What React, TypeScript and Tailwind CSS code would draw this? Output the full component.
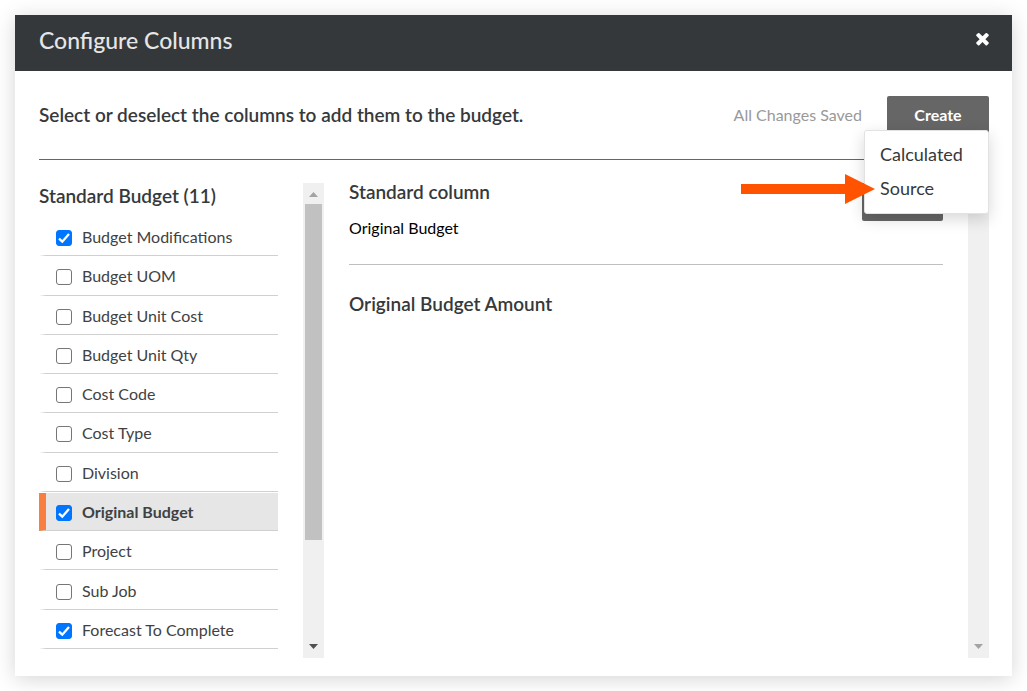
import { useState } from "react";

const columns = [
  { name: "Budget Modifications", enabled: true },
  { name: "Budget UOM", enabled: false },
  { name: "Budget Unit Cost", enabled: false },
  { name: "Budget Unit Qty", enabled: false },
  { name: "Cost Code", enabled: false },
  { name: "Cost Type", enabled: false },
  { name: "Division", enabled: false },
  { name: "Original Budget", enabled: true },
  { name: "Project", enabled: false },
  { name: "Sub Job", enabled: false },
  { name: "Forecast To Complete", enabled: true },
];

function ColumnRow({ name, enabled, active }: { name: string; enabled: boolean; active: boolean }) {
  const [checked, setChecked] = useState(enabled);
  return (
    <li className="flex pt-px">
      <label
        className={
          active
            ? "flex flex-1 items-center border-b border-b-[#d0d0d0] border-l-7 border-l-[#f77f42] bg-[#e6e6e6] pt-px pl-2.5 font-bold"
            : "flex flex-1 items-center border-b border-b-[#d0d0d0] border-l-7 border-l-transparent pt-px pl-2.5"
        }
      >
        <span className="relative mt-0.5 flex size-4">
          <input
            type="checkbox"
            checked={checked}
            onChange={() => setChecked(!checked)}
            className="size-4 appearance-none rounded-[3px] border border-[#767676] bg-white checked:border-[#0075ff] checked:bg-[#0075ff]"
          />
          {checked && (
            <svg viewBox="0 0 16 16" className="pointer-events-none absolute inset-0 size-4" fill="none">
              <path d="M3 8.6 6.3 11.7 13 4" stroke="#fff" strokeWidth="2.3" />
            </svg>
          )}
        </span>
        <span className="pl-2.5">{name}</span>
      </label>
    </li>
  );
}

function Triangle({ up, dark }: { up?: boolean; dark?: boolean }) {
  return (
    <svg viewBox="0 0 9 5" className="h-[5px] w-[9px]" fill={dark ? "#505050" : "#a3a3a3"}>
      <path d={up ? "M0 5 4.5 0 9 5z" : "M0 0 4.5 5 9 0z"} />
    </svg>
  );
}

export default function App() {
  return (
    <div className="bg-white p-[15px] font-[Lato,sans-serif] text-[#36393b]">
      <section
        role="dialog"
        aria-labelledby="dialog-title"
        className="bg-white shadow-[0_3px_20px_rgba(0,0,0,0.17)]"
      >
        <header className="flex h-14 items-start justify-between bg-[#34383b] pr-5 pl-6">
          <h1 id="dialog-title" className="pt-[9px] text-[23px] leading-8 font-medium text-[#e6e6e6]">
            Configure Columns
          </h1>
          <button type="button" aria-label="Close" className="mt-3.5">
            <svg viewBox="0 0 1792 1792" className="size-[19px]" fill="#fff">
              <path d="M1490 1322q0 40-28 68l-136 136q-28 28-68 28t-68-28l-294-294-294 294q-28 28-68 28t-68-28l-136-136q-28-28-28-68t28-68l294-294-294-294q-28-28-28-68t28-68l136-136q28-28 68-28t68 28l294 294 294-294q28-28 68-28t68 28l136 136q28 28 28 68t-28 68l-294 294 294 294q28 28 28 68z" />
            </svg>
          </button>
        </header>

        <div className="pt-[25px] pr-[23px] pb-[18px] pl-6">
          <div className="flex h-16 items-start border-b border-[#666]">
            <h2 className="flex-1 pt-[5px] text-[19px] leading-7 font-semibold">
              Select or deselect the columns to add them to the budget.
            </h2>
            <span className="pt-[7px] pr-[25px] text-base text-[#999]">All Changes Saved</span>
            <div className="relative">
              <button
                type="button"
                aria-haspopup="menu"
                aria-expanded="true"
                className="h-[38px] w-[102px] rounded-[2px] bg-[#666] text-base font-bold text-white"
              >
                Create
              </button>
              <ul
                role="menu"
                className="absolute top-[34px] right-0 z-10 w-[125px] rounded-[3px] border border-[#e2e2e2] bg-white pt-1.5 pb-2 text-lg shadow-[0_5px_16px_rgba(0,0,0,0.16)]"
              >
                <li role="none">
                  <button type="button" role="menuitem" className="h-[34px] w-full pl-[15px] text-left">
                    Calculated
                  </button>
                </li>
                <li role="none" className="relative">
                  <button type="button" role="menuitem" className="h-[34px] w-full pl-[15px] text-left">
                    Source
                  </button>
                  <svg
                    viewBox="0 0 134 30"
                    aria-hidden="true"
                    className="pointer-events-none absolute top-[3px] right-[113px] h-[30px] w-[134px]"
                    fill="#ff5300"
                  >
                    <path d="M0 10H104V0L134 15 104 30V20H0z" />
                  </svg>
                </li>
              </ul>
            </div>
          </div>

          <div className="mt-[23px] flex h-[475px]">
            <aside className="flex w-[239px] flex-col pb-[9px]">
              <h3 className="h-[34px] text-[19px] leading-[26px] font-semibold">Standard Budget (11)</h3>
              <ul className="grid flex-1 auto-rows-fr text-base text-[#3f4244]">
                {columns.map((c) => (
                  <ColumnRow key={c.name} name={c.name} enabled={c.enabled} active={c.name === "Original Budget"} />
                ))}
              </ul>
            </aside>
            <div className="ml-[25px] flex w-[21px] flex-col items-center justify-between bg-[#f0f0f0] py-[9px]">
              <Triangle up />
              <div className="mt-[7px] mb-auto h-[336px] w-[17px] bg-[#c1c1c1]" />
              <Triangle dark />
            </div>

            <main className="ml-[25px] flex-1">
              <div className="flex h-[82px] items-start justify-between border-b border-[#bfbfbf]">
                <div>
                  <h3 className="text-[19px] leading-[18px] font-semibold">Standard column</h3>
                  <p className="pt-[15px] text-base text-black">Original Budget</p>
                </div>
                <button type="button" aria-label="Edit" className="h-[38px] w-[81px] rounded-[2px] bg-[#666]" />
              </div>
              <h3 className="pt-[26px] text-[19px] leading-[26px] font-semibold">Original Budget Amount</h3>
            </main>
            <div className="ml-[25px] flex w-[21px] flex-col items-center justify-between bg-[#f0f0f0] py-[9px]">
              <Triangle up />
              <Triangle />
            </div>
          </div>
        </div>
      </section>
    </div>
  );
}
